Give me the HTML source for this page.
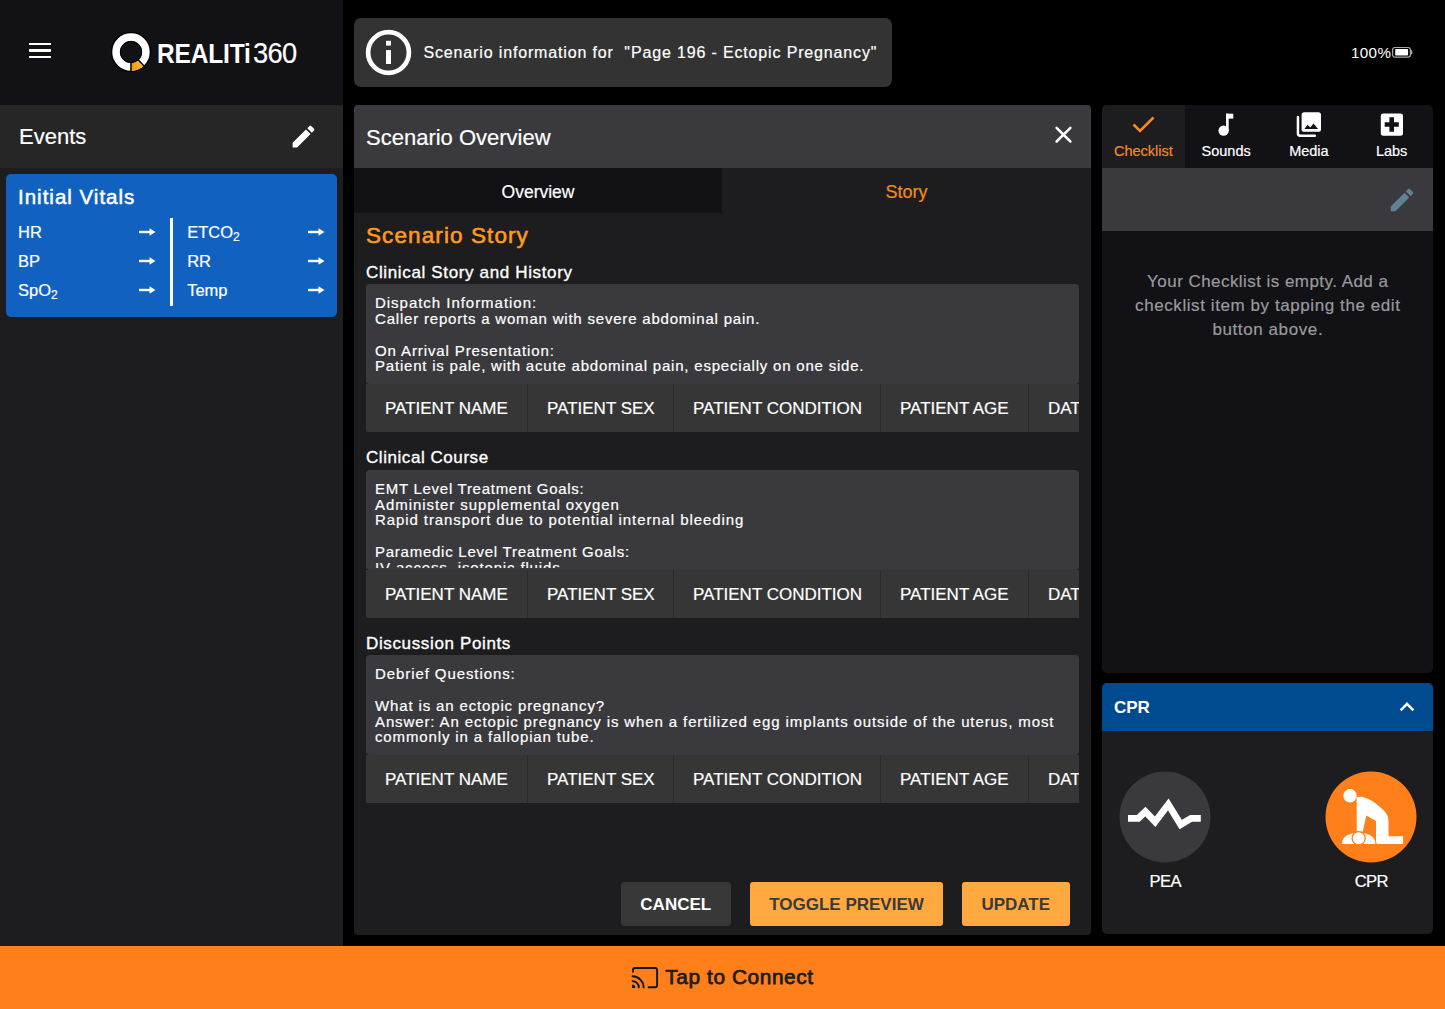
<!DOCTYPE html><html><head><meta charset="utf-8"><style>
html,body{margin:0;padding:0;}
body{width:1445px;height:1009px;overflow:hidden;background:#000;position:relative;font-family:"Liberation Sans",sans-serif;}
.t{position:absolute;white-space:pre;}
.r{position:absolute;}
svg{position:absolute;}
</style></head><body>
<div class="r" style="left:0px;top:0px;width:343px;height:105px;background:#111116;"></div>
<div class="r" style="left:29px;top:42.7px;width:22px;height:2.2px;background:#fff;"></div>
<div class="r" style="left:29px;top:49.4px;width:22px;height:2.2px;background:#fff;"></div>
<div class="r" style="left:29px;top:56.0px;width:22px;height:2.2px;background:#fff;"></div>
<svg style="left:109.5px;top:31.2px" width="42" height="42" viewBox="0 0 42 42">
<circle cx="21" cy="21" r="19.3" fill="none" stroke="#000" stroke-width="1.4"/>
<circle cx="21" cy="21" r="14.9" fill="none" stroke="#fff" stroke-width="7.6"/>
<path d="M21.00 35.90 A14.9 14.9 0 0 0 24.48 35.49" fill="none" stroke="#f29a1f" stroke-width="7.6"/>
<path d="M23.72 35.65 A14.9 14.9 0 0 0 27.18 34.56" fill="none" stroke="#f6a31b" stroke-width="7.6"/>
<path d="M26.46 34.86 A14.9 14.9 0 0 0 29.65 33.13" fill="none" stroke="#fbb015" stroke-width="7.6"/>
<path d="M29.01 33.57 A14.9 14.9 0 0 0 31.16 31.90" fill="none" stroke="#ffba10" stroke-width="7.6"/>
<path d="M21 31.6 V40.6" stroke="#000" stroke-width="1.5"/>
<path d="M28.4 29 L34.5 35.5" stroke="#000" stroke-width="1.6"/>
<circle cx="21" cy="21" r="10.7" fill="none" stroke="#000" stroke-width="0.9"/>
</svg>
<div class="t" style="left:157px;top:40.00px;font-size:28px;line-height:28px;color:#fff;font-weight:700;letter-spacing:-0.2px;transform:scaleX(0.875);transform-origin:0 0;">REALITi</div>
<div class="t" style="left:253px;top:39.15px;font-size:29px;line-height:29px;color:#fff;font-weight:400;letter-spacing:-0.7px;-webkit-text-stroke:0.2px #fff;transform:scaleX(0.94);transform-origin:0 0;">360</div>
<div class="r" style="left:0px;top:105px;width:343px;height:63px;background:#262627;"></div>
<div class="r" style="left:0px;top:168px;width:343px;height:778px;background:#1d1d1f;"></div>
<div class="t" style="left:19px;top:125.58px;font-size:22px;line-height:22px;color:#fff;font-weight:400;-webkit-text-stroke:0.2px #fff;">Events</div>
<svg style="left:289.3px;top:122.3px" width="29" height="29" viewBox="0 0 24 24">
<path fill="#fff" d="M3 17.25V21h3.75L17.81 9.94l-3.75-3.75L3 17.25zM20.71 7.04a1 1 0 0 0 0-1.41l-2.34-2.34a1 1 0 0 0-1.41 0l-1.83 1.83 3.75 3.75 1.83-1.83z"/>
</svg>
<div class="r" style="left:6px;top:174px;width:331px;height:142.5px;background:#1162c0;border-radius:5px;"></div>
<div class="t" style="left:18px;top:186.65px;font-size:20.5px;line-height:20.5px;color:#fff;font-weight:400;letter-spacing:1.0px;-webkit-text-stroke:0.5px #fff;">Initial Vitals</div>
<div class="t" style="left:18px;top:224.43px;font-size:16.5px;line-height:16.5px;color:#fff;font-weight:400;-webkit-text-stroke:0.2px #fff;">HR</div>
<div class="t" style="left:18px;top:253.33px;font-size:16.5px;line-height:16.5px;color:#fff;font-weight:400;-webkit-text-stroke:0.2px #fff;">BP</div>
<div class="t" style="left:18px;top:282.33px;font-size:16.5px;line-height:16.5px;color:#fff;font-weight:400;-webkit-text-stroke:0.2px #fff;">SpO<span style="font-size:12px;position:relative;top:3px">2</span></div>
<div class="t" style="left:187.2px;top:224.43px;font-size:16.5px;line-height:16.5px;color:#fff;font-weight:400;-webkit-text-stroke:0.2px #fff;">ETCO<span style="font-size:12px;position:relative;top:3px">2</span></div>
<div class="t" style="left:187.2px;top:253.33px;font-size:16.5px;line-height:16.5px;color:#fff;font-weight:400;-webkit-text-stroke:0.2px #fff;">RR</div>
<div class="t" style="left:187.2px;top:282.33px;font-size:16.5px;line-height:16.5px;color:#fff;font-weight:400;-webkit-text-stroke:0.2px #fff;">Temp</div>
<svg style="left:139px;top:227.4px" width="17" height="10" viewBox="0 0 17 10"><path d="M0 5h11" stroke="#fff" stroke-width="2.4"/><path d="M10.5 1.3 L16.5 5 L10.5 8.7z" fill="#fff"/></svg>
<svg style="left:307.5px;top:227.4px" width="17" height="10" viewBox="0 0 17 10"><path d="M0 5h11" stroke="#fff" stroke-width="2.4"/><path d="M10.5 1.3 L16.5 5 L10.5 8.7z" fill="#fff"/></svg>
<svg style="left:139px;top:256.3px" width="17" height="10" viewBox="0 0 17 10"><path d="M0 5h11" stroke="#fff" stroke-width="2.4"/><path d="M10.5 1.3 L16.5 5 L10.5 8.7z" fill="#fff"/></svg>
<svg style="left:307.5px;top:256.3px" width="17" height="10" viewBox="0 0 17 10"><path d="M0 5h11" stroke="#fff" stroke-width="2.4"/><path d="M10.5 1.3 L16.5 5 L10.5 8.7z" fill="#fff"/></svg>
<svg style="left:139px;top:285.3px" width="17" height="10" viewBox="0 0 17 10"><path d="M0 5h11" stroke="#fff" stroke-width="2.4"/><path d="M10.5 1.3 L16.5 5 L10.5 8.7z" fill="#fff"/></svg>
<svg style="left:307.5px;top:285.3px" width="17" height="10" viewBox="0 0 17 10"><path d="M0 5h11" stroke="#fff" stroke-width="2.4"/><path d="M10.5 1.3 L16.5 5 L10.5 8.7z" fill="#fff"/></svg>
<div class="r" style="left:170px;top:217.5px;width:2.5px;height:88px;background:#fff;"></div>
<div class="r" style="left:354px;top:18px;width:538px;height:68.5px;background:#333334;border-radius:7px;"></div>
<svg style="left:365px;top:29px" width="47" height="47" viewBox="0 0 47 47">
<circle cx="23.5" cy="23.5" r="20.4" fill="none" stroke="#fff" stroke-width="4.7"/>
<rect x="21" y="11.8" width="5" height="4.8" fill="#fff"/>
<rect x="21" y="21.1" width="5" height="13.9" fill="#fff"/>
</svg>
<div class="t" style="left:423.5px;top:45.06px;font-size:16px;line-height:16px;color:#fff;font-weight:400;letter-spacing:0.85px;-webkit-text-stroke:0.2px #fff;">Scenario information for  "Page 196 - Ectopic Pregnancy"</div>
<div class="t" style="left:1351px;top:44.73px;font-size:15.2px;line-height:15.2px;color:#fff;font-weight:400;letter-spacing:0.35px;">100%</div>
<svg style="left:1391px;top:46px" width="22" height="13" viewBox="0 0 22 13">
<rect x="1.6" y="1.5" width="17.8" height="9.6" rx="2.4" fill="none" stroke="#aaa" stroke-width="1.2"/>
<rect x="4.2" y="2.9" width="12.9" height="6.7" rx="0.8" fill="#fff"/>
<path d="M20.3 4.3 Q21.3 6.3 20.3 8.3" fill="none" stroke="#aaa" stroke-width="1.3"/>
</svg>
<div class="r" style="left:354px;top:105px;width:737px;height:830px;background:#1d1d1f;border-radius:4px;overflow:hidden;"></div>
<div class="r" style="left:354px;top:105px;width:737px;height:63px;background:#3a393e;border-radius:4px 4px 0 0;"></div>
<div class="t" style="left:366px;top:126.58px;font-size:22px;line-height:22px;color:#fff;font-weight:400;-webkit-text-stroke:0.2px #fff;">Scenario Overview</div>
<svg style="left:1053.1px;top:123.7px" width="20" height="21" viewBox="0 0 20 21">
<path d="M3.6 3.9 L17.4 17.5 M17.4 3.9 L3.6 17.5" stroke="#fff" stroke-width="2.5" stroke-linecap="round"/>
</svg>
<div class="r" style="left:354px;top:168px;width:368px;height:45px;background:#111116;"></div>
<div class="t" style="left:354px;top:183.79px;font-size:17.5px;line-height:17.5px;color:#fff;font-weight:400;-webkit-text-stroke:0.2px #fff;width:368px;text-align:center;">Overview</div>
<div class="t" style="left:722px;top:183.36px;font-size:18px;line-height:18px;color:#f58a23;font-weight:400;-webkit-text-stroke:0.2px #f58a23;width:369px;text-align:center;">Story</div>
<div class="t" style="left:366px;top:225.35px;font-size:22.5px;line-height:22.5px;color:#ff9a1a;font-weight:400;letter-spacing:1.1px;-webkit-text-stroke:0.6px #ff9a1a;">Scenario Story</div>
<div class="t" style="left:366px;top:263.51px;font-size:17px;line-height:17px;color:#fff;font-weight:400;letter-spacing:0.644px;-webkit-text-stroke:0.35px #fff;">Clinical Story and History</div>
<div class="r" style="left:366px;top:284px;width:713px;height:100px;background:#3a393e;border-radius:4px;"></div>
<div class="r" style="left:366px;top:284px;width:713px;height:98.3px;overflow:hidden;"><div class="t" style="left:9px;top:11.30px;font-size:15px;line-height:15px;color:#fff;font-weight:400;letter-spacing:0.97px;-webkit-text-stroke:0.2px #fff;">Dispatch Information:</div>
<div class="t" style="left:9px;top:27.05px;font-size:15px;line-height:15px;color:#fff;font-weight:400;letter-spacing:0.8px;-webkit-text-stroke:0.2px #fff;">Caller reports a woman with severe abdominal pain.</div>
<div class="t" style="left:9px;top:58.55px;font-size:15px;line-height:15px;color:#fff;font-weight:400;letter-spacing:0.89px;-webkit-text-stroke:0.2px #fff;">On Arrival Presentation:</div>
<div class="t" style="left:9px;top:74.30px;font-size:15px;line-height:15px;color:#fff;font-weight:400;letter-spacing:0.794px;-webkit-text-stroke:0.2px #fff;">Patient is pale, with acute abdominal pain, especially on one side.</div>
</div>
<div class="r" style="left:366px;top:384px;width:713px;height:48px;overflow:hidden;border-radius:0 0 0 2px;background:#2b2b2c;"><div class="r" style="left:0px;top:0px;width:161px;height:48px;background:#363636;"></div>
<div class="t" style="left:19px;top:16.11px;font-size:17px;line-height:17px;color:#fff;font-weight:400;-webkit-text-stroke:0.2px #fff;">PATIENT NAME</div>
<div class="r" style="left:162px;top:0px;width:145px;height:48px;background:#363636;"></div>
<div class="t" style="left:181px;top:16.11px;font-size:17px;line-height:17px;color:#fff;font-weight:400;-webkit-text-stroke:0.2px #fff;">PATIENT SEX</div>
<div class="r" style="left:308px;top:0px;width:206px;height:48px;background:#363636;"></div>
<div class="t" style="left:327px;top:16.11px;font-size:17px;line-height:17px;color:#fff;font-weight:400;-webkit-text-stroke:0.2px #fff;">PATIENT CONDITION</div>
<div class="r" style="left:515px;top:0px;width:147px;height:48px;background:#363636;"></div>
<div class="t" style="left:534px;top:16.11px;font-size:17px;line-height:17px;color:#fff;font-weight:400;-webkit-text-stroke:0.2px #fff;">PATIENT AGE</div>
<div class="r" style="left:663px;top:0px;width:160px;height:48px;background:#363636;"></div>
<div class="t" style="left:682px;top:16.11px;font-size:17px;line-height:17px;color:#fff;font-weight:400;-webkit-text-stroke:0.2px #fff;">DATE</div>
</div>
<div class="t" style="left:366px;top:449.01px;font-size:17px;line-height:17px;color:#fff;font-weight:400;letter-spacing:0.557px;-webkit-text-stroke:0.35px #fff;">Clinical Course</div>
<div class="r" style="left:366px;top:469.5px;width:713px;height:100px;background:#3a393e;border-radius:4px;"></div>
<div class="r" style="left:366px;top:469.5px;width:713px;height:98.3px;overflow:hidden;"><div class="t" style="left:9px;top:11.30px;font-size:15px;line-height:15px;color:#fff;font-weight:400;letter-spacing:0.724px;-webkit-text-stroke:0.2px #fff;">EMT Level Treatment Goals:</div>
<div class="t" style="left:9px;top:27.05px;font-size:15px;line-height:15px;color:#fff;font-weight:400;letter-spacing:0.934px;-webkit-text-stroke:0.2px #fff;">Administer supplemental oxygen</div>
<div class="t" style="left:9px;top:42.80px;font-size:15px;line-height:15px;color:#fff;font-weight:400;letter-spacing:0.912px;-webkit-text-stroke:0.2px #fff;">Rapid transport due to potential internal bleeding</div>
<div class="t" style="left:9px;top:74.30px;font-size:15px;line-height:15px;color:#fff;font-weight:400;letter-spacing:0.746px;-webkit-text-stroke:0.2px #fff;">Paramedic Level Treatment Goals:</div>
<div class="t" style="left:9px;top:90.05px;font-size:15px;line-height:15px;color:#fff;font-weight:400;letter-spacing:0.85px;-webkit-text-stroke:0.2px #fff;">IV access, isotonic fluids</div>
</div>
<div class="r" style="left:366px;top:569.5px;width:713px;height:48px;overflow:hidden;border-radius:0 0 0 2px;background:#2b2b2c;"><div class="r" style="left:0px;top:0px;width:161px;height:48px;background:#363636;"></div>
<div class="t" style="left:19px;top:16.11px;font-size:17px;line-height:17px;color:#fff;font-weight:400;-webkit-text-stroke:0.2px #fff;">PATIENT NAME</div>
<div class="r" style="left:162px;top:0px;width:145px;height:48px;background:#363636;"></div>
<div class="t" style="left:181px;top:16.11px;font-size:17px;line-height:17px;color:#fff;font-weight:400;-webkit-text-stroke:0.2px #fff;">PATIENT SEX</div>
<div class="r" style="left:308px;top:0px;width:206px;height:48px;background:#363636;"></div>
<div class="t" style="left:327px;top:16.11px;font-size:17px;line-height:17px;color:#fff;font-weight:400;-webkit-text-stroke:0.2px #fff;">PATIENT CONDITION</div>
<div class="r" style="left:515px;top:0px;width:147px;height:48px;background:#363636;"></div>
<div class="t" style="left:534px;top:16.11px;font-size:17px;line-height:17px;color:#fff;font-weight:400;-webkit-text-stroke:0.2px #fff;">PATIENT AGE</div>
<div class="r" style="left:663px;top:0px;width:160px;height:48px;background:#363636;"></div>
<div class="t" style="left:682px;top:16.11px;font-size:17px;line-height:17px;color:#fff;font-weight:400;-webkit-text-stroke:0.2px #fff;">DATE</div>
</div>
<div class="t" style="left:366px;top:634.51px;font-size:17px;line-height:17px;color:#fff;font-weight:400;letter-spacing:0.637px;-webkit-text-stroke:0.35px #fff;">Discussion Points</div>
<div class="r" style="left:366px;top:655px;width:713px;height:100px;background:#3a393e;border-radius:4px;"></div>
<div class="r" style="left:366px;top:655px;width:713px;height:98.3px;overflow:hidden;"><div class="t" style="left:9px;top:11.30px;font-size:15px;line-height:15px;color:#fff;font-weight:400;letter-spacing:0.914px;-webkit-text-stroke:0.2px #fff;">Debrief Questions:</div>
<div class="t" style="left:9px;top:42.80px;font-size:15px;line-height:15px;color:#fff;font-weight:400;letter-spacing:0.856px;-webkit-text-stroke:0.2px #fff;">What is an ectopic pregnancy?</div>
<div class="t" style="left:9px;top:58.55px;font-size:15px;line-height:15px;color:#fff;font-weight:400;letter-spacing:0.887px;-webkit-text-stroke:0.2px #fff;">Answer: An ectopic pregnancy is when a fertilized egg implants outside of the uterus, most</div>
<div class="t" style="left:9px;top:74.30px;font-size:15px;line-height:15px;color:#fff;font-weight:400;letter-spacing:0.87px;-webkit-text-stroke:0.2px #fff;">commonly in a fallopian tube.</div>
</div>
<div class="r" style="left:366px;top:755px;width:713px;height:48px;overflow:hidden;border-radius:0 0 0 2px;background:#2b2b2c;"><div class="r" style="left:0px;top:0px;width:161px;height:48px;background:#363636;"></div>
<div class="t" style="left:19px;top:16.11px;font-size:17px;line-height:17px;color:#fff;font-weight:400;-webkit-text-stroke:0.2px #fff;">PATIENT NAME</div>
<div class="r" style="left:162px;top:0px;width:145px;height:48px;background:#363636;"></div>
<div class="t" style="left:181px;top:16.11px;font-size:17px;line-height:17px;color:#fff;font-weight:400;-webkit-text-stroke:0.2px #fff;">PATIENT SEX</div>
<div class="r" style="left:308px;top:0px;width:206px;height:48px;background:#363636;"></div>
<div class="t" style="left:327px;top:16.11px;font-size:17px;line-height:17px;color:#fff;font-weight:400;-webkit-text-stroke:0.2px #fff;">PATIENT CONDITION</div>
<div class="r" style="left:515px;top:0px;width:147px;height:48px;background:#363636;"></div>
<div class="t" style="left:534px;top:16.11px;font-size:17px;line-height:17px;color:#fff;font-weight:400;-webkit-text-stroke:0.2px #fff;">PATIENT AGE</div>
<div class="r" style="left:663px;top:0px;width:160px;height:48px;background:#363636;"></div>
<div class="t" style="left:682px;top:16.11px;font-size:17px;line-height:17px;color:#fff;font-weight:400;-webkit-text-stroke:0.2px #fff;">DATE</div>
</div>
<div class="r" style="left:621px;top:882px;width:109.5px;height:43.5px;background:#383838;border-radius:3px;"></div>
<div class="t" style="left:621px;top:895.61px;font-size:17px;line-height:17px;color:#fff;font-weight:700;width:109.5px;text-align:center;">CANCEL</div>
<div class="r" style="left:750px;top:882px;width:193px;height:43.5px;background:#ffa940;border-radius:3px;"></div>
<div class="t" style="left:750px;top:895.61px;font-size:17px;line-height:17px;color:#3a3a3c;font-weight:700;width:193px;text-align:center;">TOGGLE PREVIEW</div>
<div class="r" style="left:962px;top:882px;width:107.5px;height:43.5px;background:#ffa940;border-radius:3px;"></div>
<div class="t" style="left:962px;top:895.61px;font-size:17px;line-height:17px;color:#3a3a3c;font-weight:700;width:107.5px;text-align:center;">UPDATE</div>
<div class="r" style="left:1102px;top:105px;width:331px;height:567.5px;background:#111116;border-radius:5px;overflow:hidden;"></div>
<div class="r" style="left:1102px;top:105px;width:83px;height:63px;background:#1d1d1f;border-radius:5px 0 0 0;"></div>
<div class="r" style="left:1102px;top:168px;width:331px;height:63px;background:#3a393e;"></div>
<div class="t" style="left:1102.0px;top:143.93px;font-size:14.5px;line-height:14.5px;color:#f58a23;font-weight:400;-webkit-text-stroke:0.2px #f58a23;width:82.75px;text-align:center;">Checklist</div>
<div class="t" style="left:1184.75px;top:143.93px;font-size:14.5px;line-height:14.5px;color:#fff;font-weight:400;-webkit-text-stroke:0.2px #fff;width:82.75px;text-align:center;">Sounds</div>
<div class="t" style="left:1267.5px;top:143.93px;font-size:14.5px;line-height:14.5px;color:#fff;font-weight:400;-webkit-text-stroke:0.2px #fff;width:82.75px;text-align:center;">Media</div>
<div class="t" style="left:1350.25px;top:143.93px;font-size:14.5px;line-height:14.5px;color:#fff;font-weight:400;-webkit-text-stroke:0.2px #fff;width:82.75px;text-align:center;">Labs</div>
<svg style="left:1131px;top:115px" width="25" height="20" viewBox="0 0 25 20">
<path d="M2.5 9.5 L9 16 L22.5 2.5" fill="none" stroke="#f58a23" stroke-width="2.6"/>
</svg>
<svg style="left:1216px;top:112px" width="20" height="26" viewBox="0 0 20 26">
<circle cx="7.6" cy="18.7" r="5.15" fill="#fff"/>
<rect x="10" y="1.7" width="2.7" height="17.5" fill="#fff"/>
<rect x="10" y="1.7" width="7.3" height="4.9" fill="#fff"/>
</svg>
<svg style="left:1295px;top:111px" width="28" height="28" viewBox="0 0 28 28">
<path d="M2.95 6 V22.5 Q2.95 24.65 5.1 24.65 H19.8" fill="none" stroke="#fff" stroke-width="2.5" stroke-linecap="round"/>
<rect x="6.6" y="1.15" width="19.4" height="19.65" rx="2.6" fill="#fff"/>
<path d="M9.4 18 L12.6 13.8 L15.3 16.6 L18.5 12.5 L23.1 18 Z" fill="#111116"/>
</svg>
<svg style="left:1380px;top:113px" width="24" height="24" viewBox="0 0 24 24">
<rect x="0.8" y="0.6" width="22.2" height="22.2" rx="2.4" fill="#fff"/>
<path d="M11.7 4.2 V18.7 M4.7 11.5 H18.8" stroke-width="4.6" stroke="#111116"/>
</svg>
<svg style="left:1386.6px;top:184.6px" width="30" height="30" viewBox="0 0 24 24">
<path fill="#5f8295" d="M3 17.25V21h3.75L17.81 9.94l-3.75-3.75L3 17.25zM20.71 7.04a1 1 0 0 0 0-1.41l-2.34-2.34a1 1 0 0 0-1.41 0l-1.83 1.83 3.75 3.75 1.83-1.83z"/>
</svg>
<div class="t" style="left:1102.225px;top:273.11px;font-size:17px;line-height:17px;color:#9a9a9e;font-weight:400;letter-spacing:0.45px;-webkit-text-stroke:0.2px #9a9a9e;width:331px;text-align:center;">Your Checklist is empty. Add a</div>
<div class="t" style="left:1102.29px;top:297.21px;font-size:17px;line-height:17px;color:#9a9a9e;font-weight:400;letter-spacing:0.58px;-webkit-text-stroke:0.2px #9a9a9e;width:331px;text-align:center;">checklist item by tapping the edit</div>
<div class="t" style="left:1102.3px;top:321.31px;font-size:17px;line-height:17px;color:#9a9a9e;font-weight:400;letter-spacing:0.6px;-webkit-text-stroke:0.2px #9a9a9e;width:331px;text-align:center;">button above.</div>
<div class="r" style="left:1102px;top:683px;width:331px;height:250.5px;background:#1d1d1f;border-radius:5px;overflow:hidden;"></div>
<div class="r" style="left:1102px;top:683px;width:331px;height:48px;background:#004a8f;border-radius:5px 5px 0 0;"></div>
<div class="t" style="left:1114px;top:699.21px;font-size:17px;line-height:17px;color:#fff;font-weight:700;">CPR</div>
<svg style="left:1398px;top:700px" width="18" height="13" viewBox="0 0 18 13">
<path d="M2.6 10.4 L9 3.9 L15.4 10.4" fill="none" stroke="#fff" stroke-width="2.5"/>
</svg>
<svg style="left:1119px;top:771px" width="92" height="92" viewBox="0 0 92 92">
<circle cx="46" cy="46" r="45.5" fill="#3a393e"/>
<path d="M9 47.3 H19.4 L26.4 40.6 L36.1 50.7 L49.3 33.4 L61.7 53.5 L72.1 47.3 H81.8" fill="none" stroke="#fff" stroke-width="6.8" stroke-linejoin="miter" stroke-miterlimit="3"/>
</svg>
<svg style="left:1325px;top:771px" width="92" height="92" viewBox="0 0 92 92">
<circle cx="46" cy="46" r="45.5" fill="#ff7f1a"/>
<circle cx="25" cy="24.8" r="6.7" fill="#fff"/>
<path d="M31.6 26.6 Q32 25.6 37.2 25.75 Q46 27.5 56.6 37.5 Q63.5 43 63.5 49.5 V65.3 H78.1 V72.9 H53 Q51 72.9 51 70.9 V50 L41.3 44.5 L37.8 60.6 L31.8 61.2 Z" fill="#fff"/>
<path d="M17.2 72.9 Q16.5 66 25 63 Q33.7 60 42.5 63 Q50.8 66 50.3 72.9 Z" fill="#fff"/>
<circle cx="33.7" cy="67.2" r="6.6" fill="#fff" stroke="#ff7f1a" stroke-width="1.3"/>
</svg>
<div class="t" style="left:1119.3px;top:874.15px;font-size:16.6px;line-height:16.6px;color:#fff;font-weight:400;letter-spacing:-0.6px;-webkit-text-stroke:0.2px #fff;width:92px;text-align:center;">PEA</div>
<div class="t" style="left:1325.3px;top:874.15px;font-size:16.6px;line-height:16.6px;color:#fff;font-weight:400;letter-spacing:-0.6px;-webkit-text-stroke:0.2px #fff;width:92px;text-align:center;">CPR</div>
<div class="r" style="left:0px;top:946px;width:1445px;height:63px;background:#ff7f1a;"></div>
<svg style="left:630px;top:965px" width="30" height="25" viewBox="0 0 30 25">
<path d="M3 6.8 V5 Q3 3 5 3 H25.1 Q27.1 3 27.1 5 V20.3 Q27.1 22.3 25.1 22.3 H18.6" fill="none" stroke="#0f1720" stroke-width="1.9" stroke-linecap="round"/>
<path d="M2.5 11.3 A11.1 11.1 0 0 1 13.6 22.4" fill="none" stroke="#0f1720" stroke-width="1.9" stroke-linecap="round"/>
<path d="M2.5 16.1 A6.3 6.3 0 0 1 8.8 22.4" fill="none" stroke="#0f1720" stroke-width="1.9" stroke-linecap="round"/>
<path d="M2 19.6 A3.3 3.3 0 0 1 5.3 22.9 H2 Z" fill="#0f1720"/>
</svg>
<div class="t" style="left:665.3px;top:967.19px;font-size:20.8px;line-height:20.8px;color:#1c1c1e;font-weight:400;letter-spacing:0.6px;-webkit-text-stroke:0.75px #1c1c1e;">Tap to Connect</div>
</body></html>
